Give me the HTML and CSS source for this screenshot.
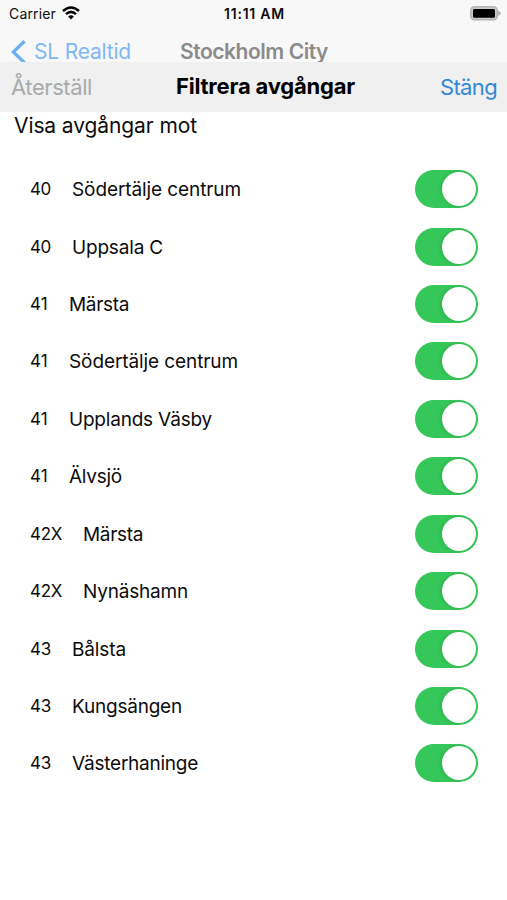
FILE: index.html
```html
<!DOCTYPE html>
<html lang="sv"><head><meta charset="utf-8"><title>Filtrera avgångar</title><link rel="stylesheet" href="styles.css"></head>
<body>
<header class="status">
<div class="carrier"><span class="fit" data-w="47">Carrier</span><svg class="wifi" width="18" height="14" viewBox="0 0 18 14"><path d="M9 13.5 6.1 10.5Q9 8.2 11.9 10.5Z"/><path class="arc" d="M4 8.1Q9 3.7 14 8.1M1 5Q9-2 17 5"/></svg></div>
<div class="time"><span class="fit" data-w="61">11:11 AM</span></div>
<svg class="battery" width="31" height="15" viewBox="0 0 31 15"><rect class="shell" x=".8" y=".8" width="26.4" height="13" rx="3.8"/><rect x="3" y="3" width="22" height="8.8" rx="1.4"/><path class="tip" d="M28 4.7Q30.8 5.5 30.8 7.3T28 9.9Z"/></svg>
</header>
<nav class="nav"><div class="back"><svg width="15" height="24" viewBox="0 0 15 24"><path d="M13.5 1.2 2.3 12 13.5 22.8"/></svg><span class="fit" data-w="97">SL Realtid</span></div><div class="city"><span class="fit" data-w="148">Stockholm City</span></div></nav>
<div class="bar"><div class="reset"><span class="fit" data-w="81">Återställ</span></div><h1><span class="fit" data-w="179">Filtrera avgångar</span></h1><div class="close"><span class="fit" data-w="57">Stäng</span></div></div>
<main><h2><span class="fit" data-w="183">Visa avgångar mot</span></h2><div class="list" id="list"></div></main>
<script src="script.js"></script>
</body></html>
```
FILE: styles.css
```css
*{box-sizing:border-box}
body{margin:0;width:507px;height:900px;overflow:hidden;background:#fff;color:#0c0c0c;font-family:Inter,sans-serif}
.fit{display:inline-block;white-space:nowrap}
.status{height:27px;display:grid;grid-template-columns:1fr auto 1fr;align-items:center;padding:0 6px 0 9px;font-size:14px;background:#f8f8f8}
.carrier{display:flex;align-items:center;gap:6px}
.wifi{margin-top:-2px}
.arc{fill:none;stroke:#000;stroke-width:2.5}
.time{font-weight:600;margin-right:1px}
.battery{justify-self:end;margin-top:-1px}
.shell{fill:#ccc;stroke:#b4b4b4;stroke-width:1.6}
.tip{fill:#b4b4b4}
.nav{height:35px;display:grid;grid-template-columns:169px auto 1fr;align-items:center;padding:12px 9px 0 11px;font-size:21px;color:#8b8b8b;background:#f8f8f8}
.back{display:flex;align-items:center;gap:8px;color:#80b8f5}
.back path{fill:none;stroke:#6fb0f5;stroke-width:3.3}
.city{font-weight:600}
.bar{height:50px;background:#f0f0f0;display:grid;grid-template-columns:165px auto 1fr;align-items:center;padding:0 10px 0 11px;font-size:22px;position:relative}
.reset{color:#a8aaac}
.close{color:#3089d3;justify-self:end}
h1{margin:0 0 2px;font-size:22px;font-weight:700;color:#000}
h2{margin:0;padding-left:14px;font-size:21px;font-weight:400;line-height:28px}
.list{padding:20.4px 29px 0 30px}
.row{height:57.45px;display:flex;align-items:center}
.line{font-size:17px;margin-right:21px}
.dest{font-size:19px;padding-top:1px}
.toggle{width:63px;height:38px;border-radius:19px;background:#35c759;margin-left:auto;padding:2px;display:flex;justify-content:flex-end}
.toggle i{width:34px;height:34px;border-radius:50%;background:#fff;box-shadow:-1px 0 4px #0002}
```
FILE: script.js
```js
const rows=[["40","Södertälje centrum",21,169],["40","Uppsala C",21,91],["41","Märsta",18,60],["41","Södertälje centrum",18,169],["41","Upplands Väsby",18,143],["41","Älvsjö",18,53],["42X","Märsta",32,60],["42X","Nynäshamn",32,105],["43","Bålsta",21,54],["43","Kungsängen",21,110],["43","Västerhaninge",21,126]];
document.getElementById("list").innerHTML=rows.map(([n,d,a,b])=>`<div class="row"><span class="line fit" data-w="${a}">${n}</span><span class="dest fit" data-w="${b}">${d}</span><span class="toggle"><i></i></span></div>`).join("");
document.querySelectorAll(".fit").forEach(e=>{const w=e.getBoundingClientRect().width,n=[...e.textContent].length,t=+e.dataset.w;e.style.letterSpacing=(t-w)/n+"px";});
```
